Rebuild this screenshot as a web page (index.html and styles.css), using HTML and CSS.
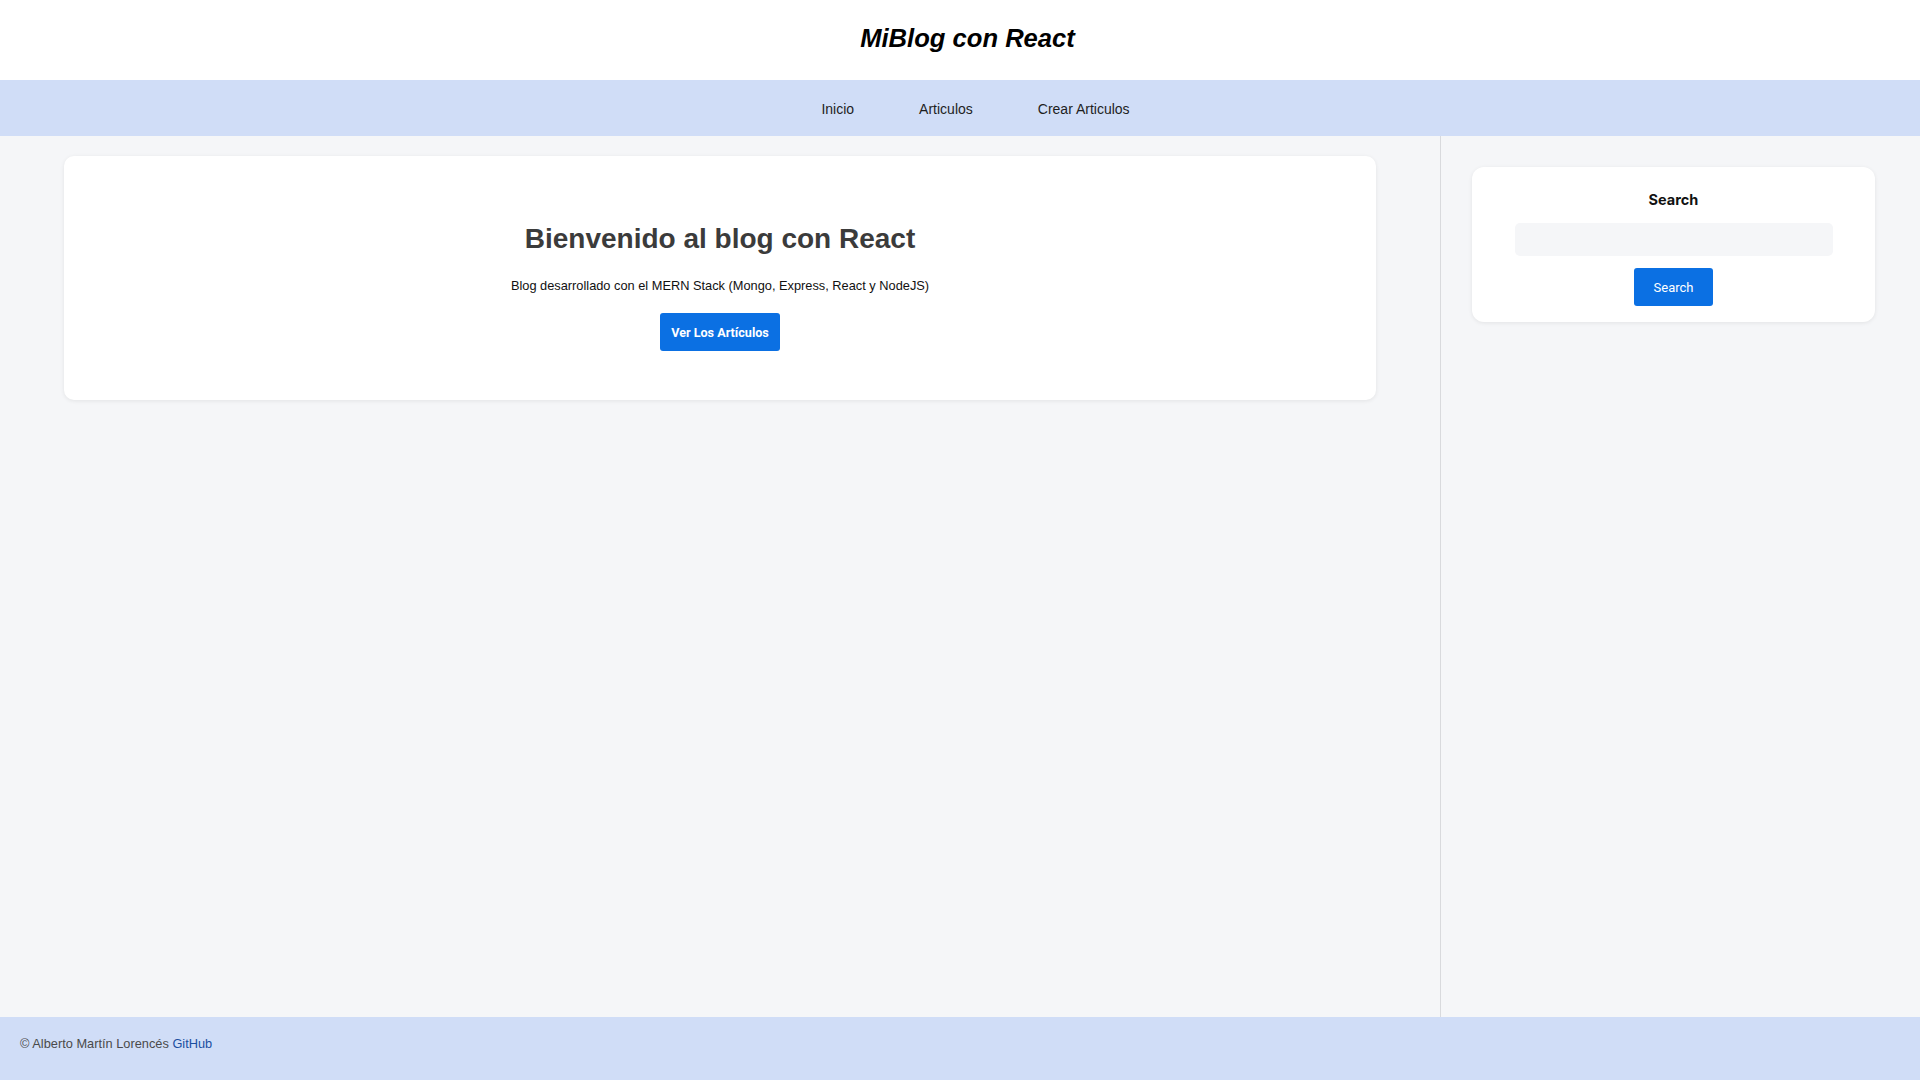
FILE: index.html
```html
<!DOCTYPE html>
<html lang="es">
<head>
<meta charset="utf-8">
<title>MiBlog con React</title>
<link rel="stylesheet" href="styles.css">
</head>
<body>
<div class="page">
  <header class="header">
    <h1 class="logo">MiBlog con React</h1>
  </header>
  <nav class="nav">
    <ul class="nav-list">
      <li><a href="#">Inicio</a></li>
      <li><a href="#">Articulos</a></li>
      <li><a href="#">Crear Articulos</a></li>
    </ul>
  </nav>
  <div class="layout">
    <main class="content">
      <section class="hero">
        <h1 class="hero-title">Bienvenido al blog con React</h1>
        <p class="hero-text">Blog desarrollado con el MERN Stack (Mongo, Express, React y NodeJS)</p>
        <a href="#" class="btn btn-hero">Ver Los Artículos</a>
      </section>
    </main>
    <aside class="sidebar">
      <div class="search-box">
        <h3 class="search-title">Search</h3>
        <input class="search-input" type="text">
        <button class="btn btn-search">Search</button>
      </div>
    </aside>
  </div>
  <footer class="footer">
    <p>&copy; Alberto Martín Lorencés <a href="#">GitHub</a></p>
  </footer>
</div>
</body>
</html>
```
FILE: styles.css
```css
* { box-sizing: border-box; }
html, body { margin: 0; padding: 0; }
body {
  font-family: "Liberation Sans", Arial, sans-serif;
  background: #f5f6f8;
  color: #111;
}
.page {
  display: flex;
  flex-direction: column;
  height: 1080px;
}
.header {
  height: 80px;
  background: #fff;
  display: flex;
  align-items: center;
  justify-content: center;
}
.logo {
  margin: 0;
  font-size: 25.6px;
  font-style: italic;
  font-weight: 700;
  color: #000;
  padding: 0 0 4px 15px;
}
.nav {
  height: 56px;
  background: #d0ddf7;
  display: flex;
  align-items: center;
  justify-content: center;
  padding-top: 2px;
}
.nav-list {
  list-style: none;
  margin: 0;
  padding: 0 0 0 31px;
  display: flex;
  gap: 65px;
}
.nav-list a {
  color: #1e1e1e;
  text-decoration: none;
  font-size: 14px;
}
.layout {
  flex: 1;
  display: flex;
}
.content {
  width: 1440px;
  padding: 20px 64px;
}
.sidebar {
  flex: 1;
  border-left: 1px solid #d9dadd;
  padding: 31px 45px 0 31px;
}
.hero {
  background: #fff;
  border-radius: 10px;
  box-shadow: 0 1px 4px rgba(0,0,0,0.08);
  padding: 67px 20px 46px;
  display: flex;
  flex-direction: column;
  align-items: center;
  height: 244px;
}
.hero-title {
  margin: 0 0 23px;
  font-size: 28px;
  line-height: 32px;
  color: #3b3b3b;
  font-weight: 700;
}
.hero-text {
  margin: 0 0 20px;
  font-size: 12.8px;
  line-height: 15px;
  color: #111;
}
.btn {
  display: inline-flex;
  align-items: center;
  justify-content: center;
  background: #0b70e3;
  color: #fff;
  border: none;
  border-radius: 3px;
  font-family: Roboto, "Liberation Sans", sans-serif;
  text-decoration: none;
  cursor: pointer;
}
.btn-hero {
  width: 120px;
  height: 38px;
  font-size: 12.6px;
  font-weight: 700;
}
.search-box {
  background: #fff;
  border-radius: 12px;
  box-shadow: 0 1px 4px rgba(0,0,0,0.08);
  padding: 24px 42px 16px;
  display: flex;
  flex-direction: column;
  align-items: center;
  height: 155px;
}
.search-title {
  margin: 0 0 14px;
  font-family: Inter, "Open Sans", sans-serif;
  font-size: 14.5px;
  line-height: 18px;
  font-weight: 700;
  color: #111;
}
.search-input {
  width: 318px;
  height: 33px;
  border: none;
  border-radius: 5px;
  background: #f5f6f8;
  margin: 0 0 12px;
  outline: none;
}
.btn-search {
  width: 79px;
  height: 38px;
  font-size: 13px;
  font-weight: 400;
}
.footer {
  height: 63px;
  background: #d0ddf7;
  padding: 19px 20px;
}
.footer p {
  margin: 0;
  font-size: 12.8px;
  line-height: 15px;
  color: #4a4a4a;
}
.footer a {
  color: #1b4fa0;
  text-decoration: none;
}
```
